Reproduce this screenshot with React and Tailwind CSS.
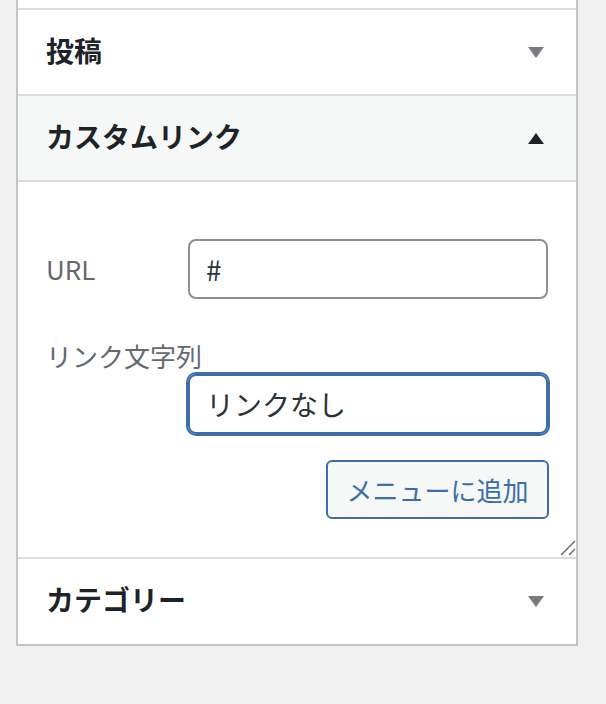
import React from "react";

const font = { fontFamily: '"Noto Sans CJK JP", "Noto Sans", sans-serif' };

function Down({ color }) {
  return (
    <svg width="16" height="11" viewBox="0 0 16 11" className="block">
      <polygon points="0,0 16,0 8,11" fill={color} />
    </svg>
  );
}
function Up() {
  return (
    <svg width="16" height="11" viewBox="0 0 16 11" className="block">
      <polygon points="0,11 16,11 8,0" fill="#1d2327" />
    </svg>
  );
}

export default function App() {
  return (
    <div
      className="w-[606px] h-[704px] bg-[#f0f0f1] overflow-hidden pl-[16px]"
      style={font}
    >
      <div className="w-[562px] bg-white border-x-2 border-b-2 border-[#c3c4c7]">
        <div className="h-[10px] border-b-2 border-[#dcdcde]" />
        <div className="h-[86px] flex items-center justify-between pl-[28px] pr-[32px] border-b-2 border-[#dcdcde]">
          <span className="text-[28px] font-bold text-[#1d2327] leading-none mb-[5px]">投稿</span>
          <Down color="#787c82" />
        </div>
        <div className="h-[86px] flex items-center justify-between pl-[28px] pr-[32px] bg-[#f6f7f7] border-b-2 border-[#dcdcde]">
          <span className="text-[28px] font-bold text-[#1d2327] leading-none mb-[5px]">カスタムリンク</span>
          <Up />
        </div>
        <div className="relative h-[377px] px-[28px] pt-[57px] border-b-2 border-[#dcdcde]">
          <div className="flex items-center">
            <span className="w-[142px] text-[26px] text-[#646970] leading-none">URL</span>
            <div className="w-[360px] h-[60px] rounded-[8px] border-2 border-[#8c8f94] flex items-center px-[16px] text-[28px] text-[#2c3338]">
              #
            </div>
          </div>
          <div className="mt-[38px] text-[26px] leading-[37px] text-[#646970]">リンク文字列</div>
          <div className="flex justify-end">
            <div className="w-[360px] h-[60px] rounded-[8px] border-2 border-[#3d6dab] shadow-[0_0_0_2px_#3d6dab] flex items-center px-[16px] text-[28px] text-[#2c3338]">
              リンクなし
            </div>
          </div>
          <div className="flex justify-end mt-[26px] mr-[-1px]">
            <div className="w-[223px] h-[59px] rounded-[6px] border-2 border-[#3d6dab] bg-[#f6f7f7] flex items-center justify-center text-[26px] text-[#3d6dab]">
              メニューに追加
            </div>
          </div>
          <svg
            width="16"
            height="16"
            viewBox="0 0 16 16"
            className="absolute right-[0px] bottom-[1px]"
          >
            <line x1="1" y1="15" x2="15" y2="1" stroke="#646970" strokeWidth="1.5" />
            <line x1="9" y1="15" x2="15" y2="9" stroke="#646970" strokeWidth="1.5" />
          </svg>
        </div>
        <div className="h-[85px] flex items-center justify-between pl-[28px] pr-[32px]">
          <span className="text-[28px] font-bold text-[#1d2327] leading-none mb-[5px]">カテゴリー</span>
          <Down color="#787c82" />
        </div>
      </div>
    </div>
  );
}
